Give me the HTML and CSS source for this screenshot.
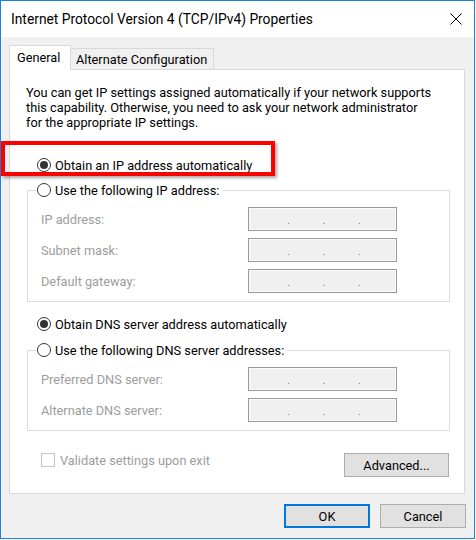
FILE: index.html
```html
<!DOCTYPE html>
<html lang="en">
<head>
<meta charset="utf-8">
<title>Internet Protocol Version 4 (TCP/IPv4) Properties</title>
<link rel="stylesheet" href="styles.css">
</head>
<body>
<div class="window">
  <div class="titlebar">
    <span class="title">Internet Protocol Version 4 (TCP/IPv4) Properties</span>
    <svg class="close" width="12" height="12" viewBox="0 0 12 12" aria-label="Close"><path d="M0.5 0.5L11.5 11.5M11.5 0.5L0.5 11.5" stroke="#000" stroke-width="1" fill="none"/></svg>
  </div>
  <div class="body">
    <div class="tabs">
      <div class="tab active">General</div>
      <div class="tab">Alternate Configuration</div>
    </div>
    <div class="panel">
      <p class="intro">You can get IP settings assigned automatically if your network supports<br>this capability. Otherwise, you need to ask your network administrator<br>for the appropriate IP settings.</p>

      <div class="option first"><span class="radio checked"></span><span>Obtain an IP address automatically</span></div>
      <div class="group ipgroup">
        <div class="legend"><span class="radio"></span><span>Use the following IP address:</span></div>
        <div class="field"><span class="label">IP address:</span><span class="ip"><span>.</span><span>.</span><span>.</span></span></div>
        <div class="field"><span class="label">Subnet mask:</span><span class="ip"><span>.</span><span>.</span><span>.</span></span></div>
        <div class="field"><span class="label">Default gateway:</span><span class="ip"><span>.</span><span>.</span><span>.</span></span></div>
      </div>

      <div class="option dns"><span class="radio checked"></span><span>Obtain DNS server address automatically</span></div>
      <div class="group dnsgroup">
        <div class="legend"><span class="radio"></span><span>Use the following DNS server addresses:</span></div>
        <div class="field"><span class="label">Preferred DNS server:</span><span class="ip"><span>.</span><span>.</span><span>.</span></span></div>
        <div class="field"><span class="label">Alternate DNS server:</span><span class="ip"><span>.</span><span>.</span><span>.</span></span></div>
      </div>

      <div class="footer">
        <div class="check"><span class="box"></span><span>Validate settings upon exit</span></div>
        <button class="btn advanced">Advanced...</button>
      </div>
    </div>
    <div class="actions">
      <button class="btn ok">OK</button>
      <button class="btn cancel">Cancel</button>
    </div>
  </div>
  <div class="highlight"></div>
</div>
</body>
</html>
```
FILE: styles.css
```css
* { box-sizing: border-box; }
html, body { margin: 0; padding: 0; background: #fff; }
body {
  font-family: Roboto, "Noto Sans", sans-serif;
  font-size: 12.75px;
  color: #000;
}
.window {
  position: relative;
  width: 475px;
  height: 539px;
  border: 1px solid #1883d7;
  background: #f0f0f0;
  display: flex;
  flex-direction: column;
}
.titlebar {
  height: 36px;
  background: #fff;
  display: flex;
  align-items: center;
  justify-content: space-between;
  padding: 0 12px 0 10px;
}
.title { font-size: 13.8px; }
.close { display: block; }
.body {
  flex: 1;
  display: flex;
  flex-direction: column;
  padding: 8px 9px 0 8px;
}
.tabs {
  position: relative;
  z-index: 1;
  height: 25px;
  margin-bottom: -1px;
  display: flex;
  align-items: flex-start;
}
.tab {
  border: 1px solid #d9d9d9;
  border-bottom: none;
  display: flex;
  align-items: center;
  background: #f0f0f0;
}
.tab.active {
  position: relative;
  z-index: 2;
  width: 62px;
  height: 25px;
  background: #fff;
  padding: 0 0 1px 7px;
}
.tab:not(.active) {
  width: 144px;
  height: 21px;
  margin-top: 3px;
  margin-left: -1px;
  padding: 1px 0 0 5px;
}
.panel {
  height: 425px;
  background: #fff;
  border: 1px solid #d9d9d9;
  display: flex;
  flex-direction: column;
}
.intro {
  margin: 15px 0 0 16px;
  line-height: 15px;
}
.option {
  height: 20px;
  display: flex;
  align-items: center;
  gap: 4px;
  margin-left: 27px;
}
.option.first { margin-top: 25px; }
.option.dns { margin-top: 12px; }
.radio {
  width: 14px;
  height: 14px;
  border: 1px solid #333;
  border-radius: 50%;
  background: #fff;
  display: flex;
  align-items: center;
  justify-content: center;
  flex: none;
}
.radio.checked::after {
  content: "";
  width: 8px;
  height: 8px;
  border-radius: 50%;
  background: #333;
}
.group {
  border: 1px solid #dcdcdc;
  margin: 0 14px 0 17px;
  padding: 0 0 8px 13px;
}
.ipgroup { margin-top: 15px; }
.dnsgroup { margin-top: 16px; }
.legend {
  width: fit-content;
  height: 20px;
  margin: -11px 0 0 -5px;
  padding: 0 3px 0 1px;
  background: #fff;
  display: flex;
  align-items: center;
  gap: 4px;
}
.field {
  height: 24px;
  display: flex;
  align-items: center;
  margin-top: 7px;
  color: #9d9d9d;
}
.label { width: 207px; flex: none; }
.ip {
  width: 149px;
  height: 24px;
  border: 1px solid #999;
  box-shadow: inset 0 0 0 1px #fbfbfb;
  background: #f0f0f0;
  display: flex;
  padding: 3px 0 0 38px;
  line-height: 20px;
  font-size: 11px;
  color: #6f7f9f;
}
.ip span { width: 35.5px; }
.footer {
  margin: 22px 15px 0 31px;
  display: flex;
  justify-content: space-between;
  align-items: flex-start;
}
.check {
  display: flex;
  align-items: center;
  gap: 5px;
  color: #9d9d9d;
  height: 14px;
}
.box {
  width: 14px;
  height: 14px;
  border: 1px solid #c4c4c4;
  background: #fff;
}
.btn {
  font-family: inherit;
  font-size: 12.75px;
  color: #000;
  background: #e1e1e1;
  border: 1px solid #adadad;
  height: 24px;
  padding: 0;
  margin: 0;
}
.advanced { width: 105px; }
.actions {
  display: flex;
  justify-content: flex-end;
  gap: 10px;
  margin: 10px -1px 0 0;
}
.ok, .cancel { width: 86px; }
.ok { border: 2px solid #0078d7; }
.highlight {
  position: absolute;
  left: 0;
  top: 140px;
  width: 274px;
  height: 35px;
  border: 4px solid #f00;
  box-shadow: 2px 2px 3px rgba(0, 0, 0, 0.35);
}
```
